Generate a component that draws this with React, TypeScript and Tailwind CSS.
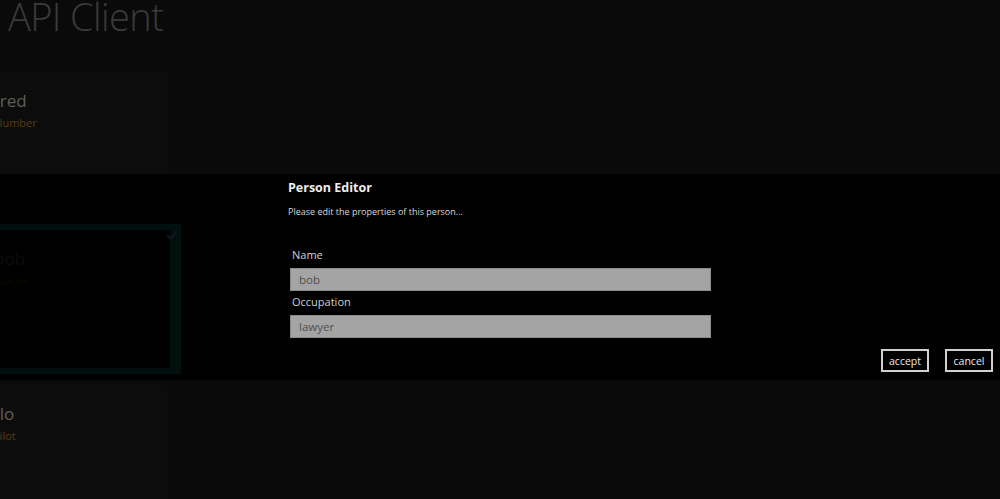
import React from 'react';

type Person = { name: string; occupation: string; top: string; selected?: boolean };

const people: Person[] = [
  { name: 'Fred', occupation: 'Plumber', top: 'mt-[33px]' },
  { name: 'bob', occupation: 'lawyer', top: 'mt-[2px]', selected: true },
  { name: 'Flo', occupation: 'Pilot', top: 'mt-[11px]' },
];

function PersonTile({ name, occupation, top, selected }: Person) {
  return (
    <div
      className={`relative h-[150px] ml-[-14px] ${top} ${
        selected ? 'w-[195px] border-[6px] border-r-[11px] border-[#0b7a7a] bg-black' : 'w-[181px] bg-[#0c0c0c]'
      }`}
    >
      {selected && (
        <svg className="absolute right-[-9px] top-[-1px]" width="14" height="12" viewBox="0 0 14 12">
          <path d="M2 6 L5.5 9.5 L12 2" stroke="#9ad" strokeWidth="2" fill="none" />
        </svg>
      )}
      <div className={selected ? 'ml-[2px] pt-[19px]' : 'ml-[5px] pt-[19px]'}>
        <div className="text-[17px] leading-[20px] text-[#5e5e5e]">{name}</div>
        <div className="mt-[5px] ml-[2px] text-[11px] leading-[13px] text-[#5a3e10]">{occupation}</div>
      </div>
    </div>
  );
}

function Field({ label, value }: { label: string; value: string }) {
  return (
    <div className="flex flex-col">
      <label className="text-[11px] leading-[14px] text-[#d0d0d0] pl-[2px]">{label}</label>
      <div className="mt-[6px] h-[23px] w-[421px] bg-[#a4a4a4] border border-[#8c8c8c] px-[8px] text-[11.5px] leading-[21px] text-[#505050]">
        {value}
      </div>
    </div>
  );
}

export default function App() {
  return (
    <div
      className="relative w-[1000px] h-[499px] overflow-hidden bg-[#0a0a0a]"
      style={{ fontFamily: '"Open Sans", "Noto Sans", sans-serif' }}
    >
      <h1 className="ml-[8px] mt-[-6px] text-[38px] leading-[45px] font-light text-[#3a3a3a] tracking-[-0.6px]">
        API Client
      </h1>

      <section className="flex flex-col">
        {people.map(p => (
          <PersonTile key={p.name} {...p} />
        ))}
      </section>

      {/* person editor dialog */}
      <div className="absolute left-0 right-0 top-[174px] h-[206px] bg-black/[0.88]">
        <div className="flex h-full">
          <div className="ml-[288px] flex flex-col pt-[6px]">
            <h2 className="text-[12.5px] leading-[16px] font-bold text-[#eeeeee]">Person Editor</h2>
            <p className="mt-[10px] text-[9px] leading-[12px] text-[#d8d8d8]">
              Please edit the properties of this person...
            </p>
            <div className="mt-[30px] flex flex-col gap-[4px] ml-[2px]">
              <Field label="Name" value="bob" />
              <Field label="Occupation" value="lawyer" />
            </div>
          </div>
          <div className="ml-auto mr-[7px] mt-auto mb-[8px] flex gap-[16px]">
            <button className="w-[48px] h-[23px] border-2 border-[#cfcfcf] text-[10.5px] leading-[18px] text-[#e8e8e8]">
              accept
            </button>
            <button className="w-[48px] h-[23px] border-2 border-[#cfcfcf] text-[10.5px] leading-[18px] text-[#e8e8e8]">
              cancel
            </button>
          </div>
        </div>
      </div>
    </div>
  );
}
